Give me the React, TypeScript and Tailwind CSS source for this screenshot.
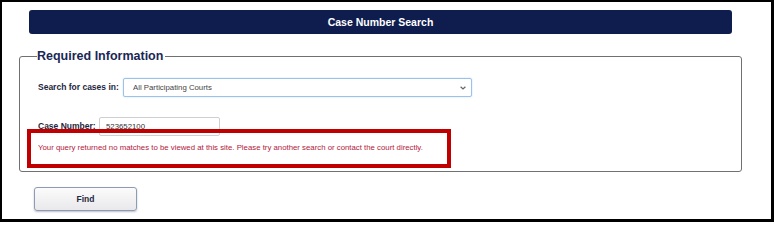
import React from "react";

export default function App() {
  return (
    <div className="relative w-[774px] h-[222px] box-border border-solid border-black border-l-2 border-t-2 border-r-[3px] border-b-[3px] bg-white font-['Liberation_Sans',Arial,sans-serif] overflow-hidden">
      <div className="mt-[8px] ml-[27px] w-[703px] h-[24px] rounded-[3px] bg-[#0e1d4d] flex items-center justify-center">
        <span className="text-white font-bold text-[10.5px] leading-none">Case Number Search</span>
      </div>

      <fieldset className="mt-[14px] ml-[17px] w-[723px] h-[124px] box-border border border-solid border-[#707070] rounded-[3px] pl-[18px] pr-[18px]">
        <legend className="px-0 text-[12.5px] leading-[16px] font-bold text-[#1a2755] -ml-px pr-[2px]">Required Information</legend>

        <div className="mt-[14px] flex items-center h-[19px]">
          <label className="text-[8.5px] font-bold text-[#1e2740] w-[85px] shrink-0 leading-none">Search for cases in:</label>
          <div className="relative w-[349px] h-[19px] leading-none">
            <select
              defaultValue="all"
              className="block appearance-none w-full h-[19px] box-border border border-solid border-[#9cc2ea] rounded-[2px] bg-white pl-[9px] py-0 text-[7.8px] leading-[17px] text-[#444] outline-none shadow-[0_0_2px_#c4dcf4]"
            >
              <option value="all">All Participating Courts</option>
            </select>
            <svg className="absolute right-[6px] top-[8px] pointer-events-none" width="6" height="4" viewBox="0 0 6 4">
              <path d="M0.6 0.7 L3 3 L5.4 0.7" fill="none" stroke="#666" strokeWidth="1.2" />
            </svg>
          </div>
        </div>

        <div className="mt-[20px] flex items-center h-[19px]">
          <label className="text-[8.5px] font-bold text-[#1e2740] w-[61px] shrink-0 leading-none">Case Number:</label>
          <input
            defaultValue="523652100"
            className="block w-[121px] h-[19px] box-border border border-solid border-[#cfcfcf] rounded-[2px] bg-white pl-[6px] text-[7.8px] text-[#333] outline-none"
          />
        </div>

        <p className="mt-[7px] text-[7.8px] leading-[10px] text-[#b3203c]">
          Your query returned no matches to be viewed at this site. Please try another search or contact the court directly.
        </p>
      </fieldset>

      <button className="mt-[15px] ml-[32px] w-[103px] h-[24px] box-border border border-solid border-[#8e9bb4] rounded-[3px] bg-gradient-to-b from-[#fbfbfb] to-[#e9e9ec] shadow-[0_1px_2px_rgba(60,70,100,0.35)] text-[8.5px] font-bold text-[#1e2740] flex items-center justify-center">
        Find
      </button>

      <div className="absolute left-[25px] top-[127px] w-[424px] h-[39px] box-border border-4 border-solid border-[#c00000] pointer-events-none" />
    </div>
  );
}
